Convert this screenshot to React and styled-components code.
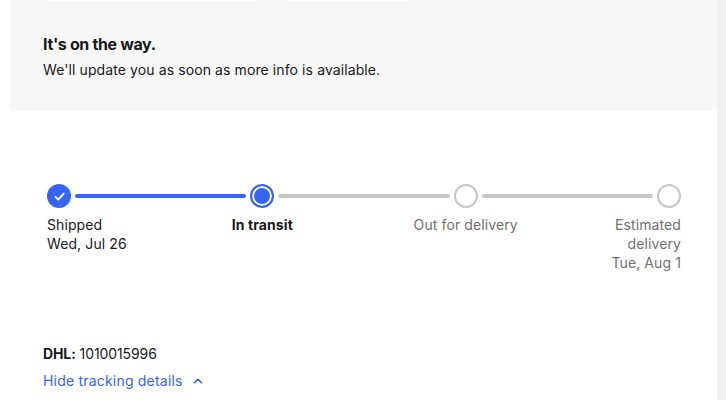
import React from 'react'
import styled, { createGlobalStyle } from 'styled-components'

const GlobalStyle = createGlobalStyle`
  body {
    margin: 0;
    background: #ffffff;
    font-family: Inter, "Noto Sans", Arial, sans-serif;
    color: #191919;
  }
`

const steps = [
  { title: 'Shipped', sub: ['Wed, Jul 26'], state: 'done', align: 'start' },
  { title: 'In transit', sub: [], state: 'current', align: 'center' },
  { title: 'Out for delivery', sub: [], state: 'todo', align: 'center' },
  { title: 'Estimated', sub: ['delivery', 'Tue, Aug 1'], state: 'todo', align: 'end' },
]

function Check() {
  return (
    <svg width="13" height="13" viewBox="0 0 12 12" fill="none">
      <path d="M2.2 6.3 L4.9 8.9 L9.9 3.4" stroke="#fff" strokeWidth="1.7" strokeLinecap="round" strokeLinejoin="round" />
    </svg>
  )
}

function ChevronUp() {
  return (
    <svg width="10" height="8" viewBox="0 0 10 8" fill="none">
      <path d="M1.5 5.8 L5 2.3 L8.5 5.8" stroke="#3665f3" strokeWidth="1.6" strokeLinecap="round" strokeLinejoin="round" />
    </svg>
  )
}

function App() {
  return (
    <>
      <GlobalStyle />
      <PageSt>
        <MainSt>
          <StatusPanelSt>
            <TabsSt>
              <TabEdgeSt $width={208} />
              <TabEdgeSt $width={123} />
            </TabsSt>
            <HeadingSt>It's on the way.</HeadingSt>
            <InfoSt>We'll update you as soon as more info is available.</InfoSt>
          </StatusPanelSt>

          <StepperSt>
            {steps.map((s, i) => (
              <React.Fragment key={s.title}>
                {i > 0 && <ConnectorSt $col={i * 2} $active={s.state !== 'todo'} />}
                <DotSt $col={i * 2 + 1} $state={s.state}>
                  {s.state === 'done' && <Check />}
                </DotSt>
                <LabelSt $col={i * 2 + 1} $align={s.align} $state={s.state}>
                  <span>{s.title}</span>
                  {s.sub.map((line) => (
                    <span key={line}>{line}</span>
                  ))}
                </LabelSt>
              </React.Fragment>
            ))}
          </StepperSt>

          <CarrierSt>
            <CarrierLineSt>
              <b>DHL:</b> 1010015996
            </CarrierLineSt>
            <ToggleSt>
              Hide tracking details
              <ChevronUp />
            </ToggleSt>
          </CarrierSt>
        </MainSt>
        <SideStripSt />
      </PageSt>
    </>
  )
}

const PageSt = styled.div`
  display: flex;
  width: 726px;
  height: 400px;
  overflow: hidden;
`

const MainSt = styled.div`
  flex: 1;
  padding-left: 10px;
  display: flex;
  flex-direction: column;
`

const SideStripSt = styled.div`
  width: 9px;
  background: #f0f0f0;
`

const StatusPanelSt = styled.section`
  height: 111px;
  background: #f8f8f8;
  padding: 0 33px;
  box-sizing: border-box;
`

const TabsSt = styled.div`
  display: flex;
  gap: 29px;
  padding-left: 5px;
  height: 1px;
`

const TabEdgeSt = styled.div`
  width: ${(p) => p.$width}px;
  height: 1px;
  background: #ffffff;
`

const HeadingSt = styled.h2`
  margin: 33px 0 0;
  font-size: 16px;
  font-weight: 700;
  line-height: 20px;
  letter-spacing: -0.35px;
`

const InfoSt = styled.p`
  margin: 6px 0 0;
  font-size: 14px;
  line-height: 20px;
  letter-spacing: 0.1px;
`

const StepperSt = styled.div`
  margin: 73px 36px 0 37px;
  display: grid;
  grid-template-columns: 24px 1fr 24px 1fr 24px 1fr 24px;
  grid-template-rows: 24px auto;
  row-gap: 7px;
  align-items: center;
`

const ConnectorSt = styled.div`
  grid-column: ${(p) => p.$col};
  grid-row: 1;
  height: 4px;
  margin: 0 4px;
  border-radius: 2px;
  background: ${(p) => (p.$active ? '#3665f3' : '#c7c7c7')};
`

const DotSt = styled.div`
  grid-column: ${(p) => p.$col};
  grid-row: 1;
  width: 24px;
  height: 24px;
  box-sizing: border-box;
  border-radius: 50%;
  display: flex;
  align-items: center;
  justify-content: center;
  ${(p) =>
    p.$state === 'done'
      ? 'background: #3665f3;'
      : p.$state === 'current'
      ? 'border: 2px solid #3665f3; background: #3665f3; box-shadow: inset 0 0 0 2px #fff;'
      : 'border: 2px solid #c7c7c7; background: #fff;'}
`

const LabelSt = styled.div`
  grid-column: ${(p) => p.$col};
  grid-row: 2;
  align-self: start;
  justify-self: ${(p) => p.$align};
  display: flex;
  flex-direction: column;
  align-items: ${(p) => (p.$align === 'start' ? 'flex-start' : p.$align === 'end' ? 'flex-end' : 'center')};
  font-size: 14px;
  line-height: 19px;
  letter-spacing: 0.1px;
  white-space: nowrap;
  font-weight: ${(p) => (p.$state === 'current' ? 700 : 400)};
  color: ${(p) => (p.$state === 'todo' ? '#707070' : '#191919')};
`

const CarrierSt = styled.div`
  margin: 72px 0 0 33px;
  display: flex;
  flex-direction: column;
  gap: 7px;
`

const CarrierLineSt = styled.div`
  font-size: 14px;
  line-height: 20px;
  letter-spacing: -0.1px;
  b {
    font-weight: 700;
  }
`

const ToggleSt = styled.button`
  align-self: flex-start;
  display: flex;
  align-items: center;
  gap: 10px;
  padding: 0;
  border: 0;
  background: none;
  font-family: inherit;
  font-size: 14px;
  line-height: 20px;
  letter-spacing: 0.2px;
  color: #3665f3;
  cursor: pointer;
`

export default App
